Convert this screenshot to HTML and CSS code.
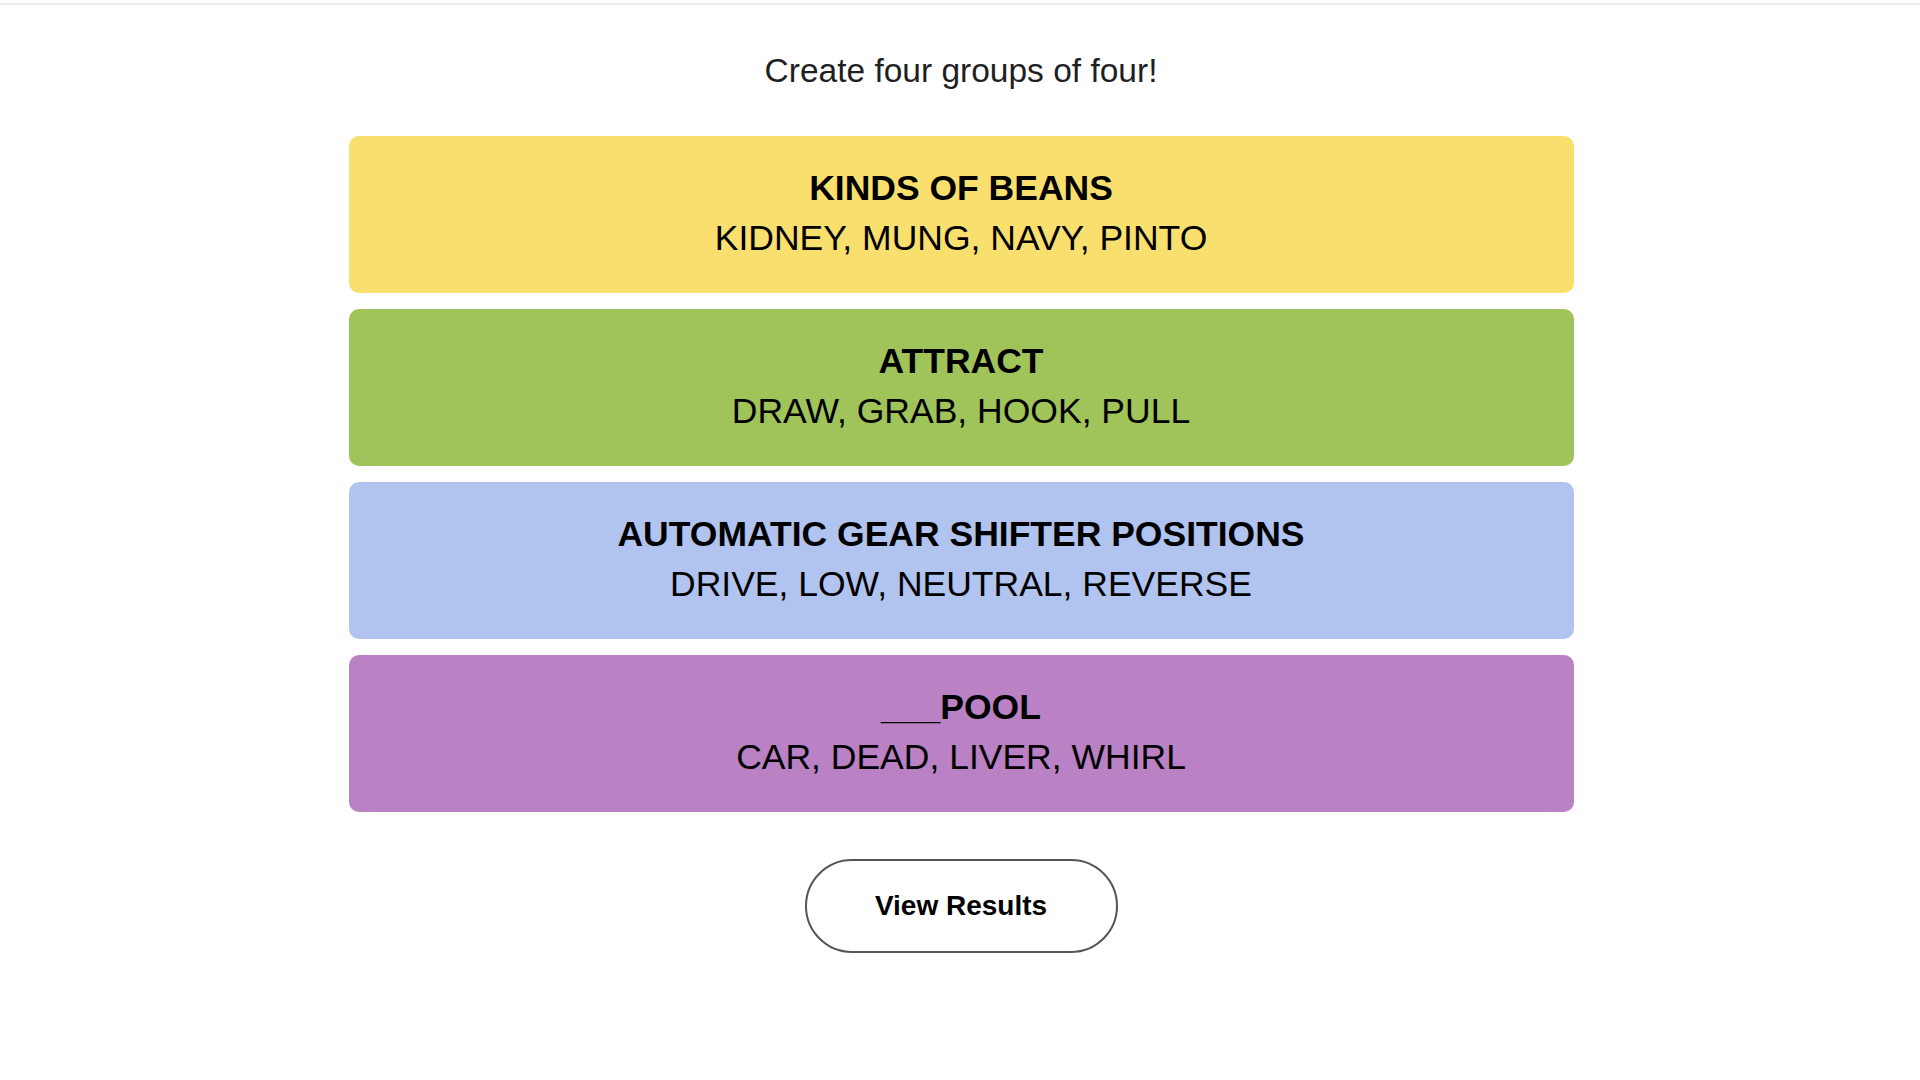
FILE: index.html
```html
<!DOCTYPE html>
<html lang="en">
<head>
<meta charset="utf-8">
<title>Connections</title>
<link rel="stylesheet" href="styles.css">
</head>
<body>
  <div class="topbar"></div>
  <main class="game">
    <p class="prompt">Create four groups of four!</p>
    <section class="groups">
      <div class="group yellow">
        <h3 class="group-title">KINDS OF BEANS</h3>
        <p class="group-words">KIDNEY, MUNG, NAVY, PINTO</p>
      </div>
      <div class="group green">
        <h3 class="group-title">ATTRACT</h3>
        <p class="group-words">DRAW, GRAB, HOOK, PULL</p>
      </div>
      <div class="group blue">
        <h3 class="group-title">AUTOMATIC GEAR SHIFTER POSITIONS</h3>
        <p class="group-words">DRIVE, LOW, NEUTRAL, REVERSE</p>
      </div>
      <div class="group purple">
        <h3 class="group-title">___POOL</h3>
        <p class="group-words">CAR, DEAD, LIVER, WHIRL</p>
      </div>
    </section>
    <button class="results-btn" type="button">View Results</button>
  </main>
</body>
</html>
```
FILE: styles.css
```css
* { box-sizing: border-box; }
html, body {
  margin: 0;
  padding: 0;
  background: #ffffff;
}
body {
  font-family: "Liberation Sans", Arial, sans-serif;
  color: #000;
}
.topbar {
  height: 2px;
  margin-top: 3px;
  background: #ebebeb;
}
.game {
  display: flex;
  flex-direction: column;
  align-items: center;
  padding-top: 46px;
  padding-left: 2px;
}
.prompt {
  margin: 0;
  font-size: 33.5px;
  line-height: 40px;
  color: #1f1f1f;
}
.groups {
  display: flex;
  flex-direction: column;
  gap: 16px;
  width: 1225px;
  margin-top: 45px;
}
.group {
  height: 157px;
  border-radius: 10px;
  display: flex;
  flex-direction: column;
  align-items: center;
  justify-content: center;
  padding-bottom: 4px;
}
.yellow { background: #f9df6d; }
.green { background: #a0c35a; }
.blue { background: #b0c4ef; }
.purple { background: #ba81c5; }
.group-title {
  margin: 0;
  font-weight: 700;
  font-size: 35.5px;
  line-height: 50px;
}
.group-words {
  margin: 0;
  font-size: 35.5px;
  line-height: 50px;
}
.results-btn {
  margin-top: 47px;
  width: 313px;
  height: 94px;
  border: 2px solid #555;
  border-radius: 47px;
  background: #fff;
  font-family: "Liberation Sans", Arial, sans-serif;
  font-weight: 700;
  font-size: 28px;
  color: #000;
}
```
